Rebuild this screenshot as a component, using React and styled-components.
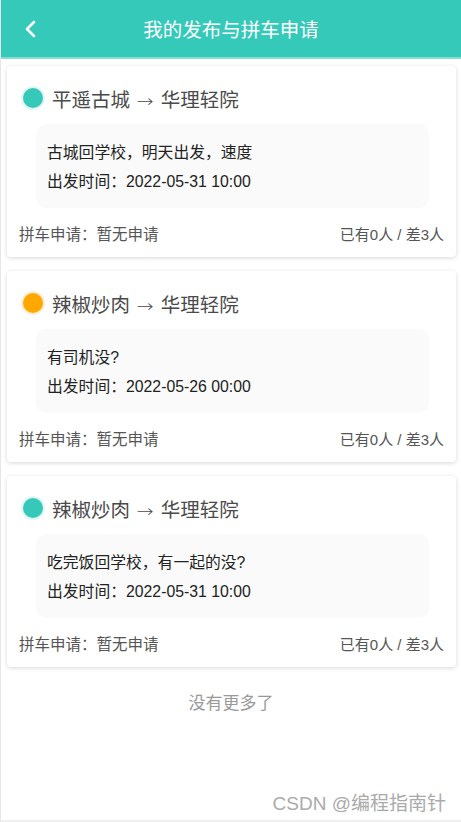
import React from "react";
import styled, { createGlobalStyle } from "styled-components";

const trips = [
  {
    from: "平遥古城",
    to: "华理轻院",
    note: "古城回学校，明天出发，速度",
    time: "2022-05-31 10:00",
    color: "#36c9b9",
    halo: "#e3f6f3",
  },
  {
    from: "辣椒炒肉",
    to: "华理轻院",
    note: "有司机没?",
    time: "2022-05-26 00:00",
    color: "#ffa800",
    halo: "#fbeed6",
  },
  {
    from: "辣椒炒肉",
    to: "华理轻院",
    note: "吃完饭回学校，有一起的没?",
    time: "2022-05-31 10:00",
    color: "#36c9b9",
    halo: "#e3f6f3",
  },
];

const App = () => {
  return (
    <Page>
      <GlobalStyle />
      <Header>
        <BackButton aria-label="返回">
          <svg width="14" height="18" viewBox="0 0 14 18">
            <polyline
              points="10,2 3,9 10,16"
              fill="none"
              stroke="#fff"
              strokeWidth="2.6"
              strokeLinecap="round"
              strokeLinejoin="round"
            />
          </svg>
        </BackButton>
        <HeaderTitle>我的发布与拼车申请</HeaderTitle>
      </Header>

      <List>
        {trips.map((t, i) => (
          <Card key={i}>
            <CardHead>
              <Dot $color={t.color} $halo={t.halo} />
              <Route>
                {t.from} <Arrow>→</Arrow> {t.to}
              </Route>
            </CardHead>
            <NoteBox>
              <NoteLine>{t.note}</NoteLine>
              <NoteLine>出发时间：{t.time}</NoteLine>
            </NoteBox>
            <CardFoot>
              <span>拼车申请：暂无申请</span>
              <Count>已有0人 / 差3人</Count>
            </CardFoot>
          </Card>
        ))}
      </List>

      <NoMore>没有更多了</NoMore>
      <Watermark>CSDN @编程指南针</Watermark>
    </Page>
  );
};

const GlobalStyle = createGlobalStyle`
  body {
    margin: 0;
    background: #fff;
    font-family: "Noto Sans CJK SC", "Liberation Sans", sans-serif;
  }
`;

const Page = styled.div`
  display: flex;
  flex-direction: column;
  height: 820px;
  border-left: 1px solid #e6e6e6;
  border-bottom: 2px solid #efefef;
  background: #fff;
  font-family: "Liberation Sans", "Noto Sans CJK SC", sans-serif;
`;

const Header = styled.div`
  position: relative;
  display: flex;
  align-items: center;
  justify-content: center;
  height: 57px;
  background-color: #35c9b9;
  border-bottom: 2px solid #86ddd4;
`;

const BackButton = styled.button`
  position: absolute;
  left: 23px;
  top: 20px;
  display: flex;
  padding: 0;
  border: none;
  background: none;
  cursor: pointer;
`;

const HeaderTitle = styled.h1`
  margin: 0;
  font-size: 19.5px;
  font-weight: normal;
  color: #fff;
`;

const List = styled.div`
  display: flex;
  flex-direction: column;
  gap: 14px;
  padding: 7px 5px 0 6px;
`;

const Card = styled.div`
  display: flex;
  flex-direction: column;
  padding: 20px 12px 12px;
  background: #fff;
  border-radius: 4px;
  box-shadow: 0 1px 4px rgba(0, 0, 0, 0.16);
`;

const CardHead = styled.div`
  display: flex;
  align-items: center;
  gap: 9px;
  height: 24px;
  padding-left: 4px;
`;

const Dot = styled.span`
  flex: none;
  width: 20px;
  height: 20px;
  border-radius: 50%;
  background: ${(p) => p.$color};
  box-shadow: 0 0 0 2px ${(p) => p.$halo};
`;

const Route = styled.span`
  font-size: 19.5px;
  color: #4a4a4a;
  white-space: pre;
`;

const Arrow = styled.span`
  display: inline-block;
  width: 20px;
  text-align: center;
  font-family: "DejaVu Sans", sans-serif;
  font-size: 17px;
  font-weight: 300;
  transform: scaleX(1.2);
`;

const NoteBox = styled.div`
  margin: 14px 15px 0 17px;
  padding: 14px 11px 12px;
  background: #fafafa;
  border-radius: 10px;
`;

const NoteLine = styled.div`
  font-size: 15.8px;
  line-height: 29px;
  color: #222;
`;

const CardFoot = styled.div`
  display: flex;
  justify-content: space-between;
  align-items: center;
  margin-top: 17px;
  font-size: 15.5px;
  line-height: 20px;
  color: #555;
`;

const Count = styled.span`
  font-size: 15px;
`;

const NoMore = styled.div`
  margin-top: 22px;
  text-align: center;
  font-size: 17px;
  color: #999;
`;

const Watermark = styled.div`
  margin-top: auto;
  padding: 0 15px 5px 0;
  text-align: right;
  font-size: 19px;
  color: #aaa;
`;

export default App;
